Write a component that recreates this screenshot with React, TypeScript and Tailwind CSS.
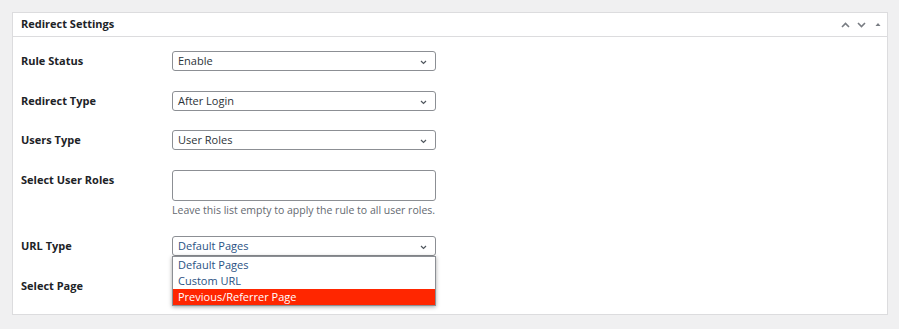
import React from "react";

const font = { fontFamily: '"Open Sans", "Noto Sans", sans-serif' };

function Chevron() {
  return (
    <svg width="7" height="5" viewBox="0 0 7 5" className="absolute right-[8px] top-[8px]">
      <path d="M1 1 L3.5 3.5 L6 1" fill="none" stroke="#50575e" strokeWidth="1.2" />
    </svg>
  );
}

function Select({ value, blue }: { value: string; blue?: boolean }) {
  return (
    <div
      className={`relative w-[264px] h-[20px] border border-[#8c8f94] rounded-[3px] bg-white pl-[5px] text-[11px] leading-[18px] ${
        blue ? "text-[#2a5283]" : "text-[#2c3338]"
      }`}
    >
      {value}
      <Chevron />
    </div>
  );
}

function Row({ label, children, mb }: { label: string; children: React.ReactNode; mb: string }) {
  return (
    <div className={`flex items-start ${mb}`}>
      <div className="w-[151px] text-[11px] leading-[20px] font-bold text-[#1d2327]">{label}</div>
      <div>{children}</div>
    </div>
  );
}

export default function App() {
  return (
    <div className="w-[899px] h-[329px] bg-[#f0f0f1] pt-[12px] pl-[12px]" style={font}>
      <div className="w-[876px] h-[303px] bg-white border border-[#dcdcde]">
        <div className="h-[24px] border-b border-[#dcdcde] flex items-center pl-[8px] pr-[6px]">
          <div className="text-[11px] font-bold text-[#1d2327] flex-1">Redirect Settings</div>
          <div className="flex items-center">
            <svg width="9" height="6" viewBox="0 0 9 6">
              <path d="M1 5 L4.5 1.5 L8 5" fill="none" stroke="#787c82" strokeWidth="1.6" />
            </svg>
            <svg width="9" height="6" viewBox="0 0 9 6" className="ml-[7px]">
              <path d="M1 1 L4.5 4.5 L8 1" fill="none" stroke="#787c82" strokeWidth="1.6" />
            </svg>
            <svg width="6" height="5" viewBox="0 0 6 5" className="ml-[9px]">
              <path d="M0.5 4 L3 1 L5.5 4 Z" fill="#787c82" />
            </svg>
          </div>
        </div>
        <div className="pl-[8px] pt-[14px]">
          <Row label="Rule Status" mb="mb-[20px]">
            <Select value="Enable" />
          </Row>
          <Row label="Redirect Type" mb="mb-[19px]">
            <Select value="After Login" />
          </Row>
          <Row label="Users Type" mb="mb-[20px]">
            <Select value="User Roles" />
          </Row>
          <Row label="Select User Roles" mb="mb-[18px]">
            <div className="w-[264px] h-[31px] border border-[#8c8f94] rounded-[3px] bg-white" />
            <div className="text-[10.5px] leading-[16px] text-[#646970] mt-[1px]">
              Leave this list empty to apply the rule to all user roles.
            </div>
          </Row>
          <Row label="URL Type" mb="mb-[20px]">
            <div className="relative">
              <Select value="Default Pages" blue />
              <div className="absolute left-0 top-full z-10 w-[264px] bg-white border border-[#8c8f94] shadow-[0_1px_4px_rgba(0,0,0,0.35)] text-[11px] leading-[16px]">
                <div className="pl-[5px] text-[#2a5283]">Default Pages</div>
                <div className="pl-[5px] text-[#2a5283]">Custom URL</div>
                <div className="pl-[5px] bg-[#ff2600] text-white">Previous/Referrer Page</div>
              </div>
            </div>
          </Row>
          <Row label="Select Page" mb="mb-0">
            <div className="w-[264px] h-[20px] border border-[#8c8f94] rounded-[3px] bg-white" />
          </Row>
        </div>
      </div>
    </div>
  );
}
